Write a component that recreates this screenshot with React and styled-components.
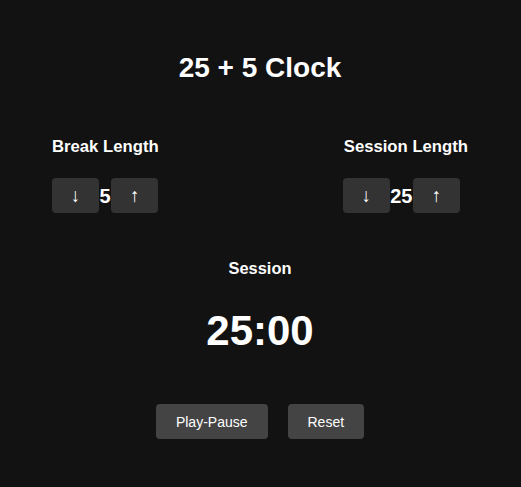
import React from "react";
import styled, { createGlobalStyle } from "styled-components";

const Global = createGlobalStyle`
  html, body { margin: 0; padding: 0; background: #121212; }
  body { font-family: "Liberation Sans", Arial, sans-serif; color: #fff; }
`;

const Page = styled.div`
  min-height: 487px;
  box-sizing: border-box;
  padding: 52px 53px 0 52px;
  display: flex;
  flex-direction: column;
  align-items: stretch;
`;

const Title = styled.h1`
  margin: 0;
  font-size: 28px;
  line-height: 32px;
  font-weight: 700;
  text-align: center;
`;

const LengthsRow = styled.div`
  margin-top: 53px;
  display: flex;
  justify-content: space-between;
  align-items: flex-start;
`;

const Column = styled.div`
  display: flex;
  flex-direction: column;
  align-items: flex-start;
`;

const Label = styled.div`
  font-size: 16.7px;
  line-height: 20px;
  font-weight: 700;
  margin-left: ${(p) => p.$offset || 0}px;
`;

const Controls = styled.div`
  margin-top: 21px;
  display: flex;
  align-items: center;
`;

const ArrowButton = styled.button`
  width: 47px;
  height: 35px;
  border: none;
  border-radius: 4px;
  background: #333;
  color: #fff;
  font-family: "Liberation Sans", Arial, sans-serif;
  font-size: 19px;
  padding: 0;
  display: flex;
  align-items: center;
  justify-content: center;
`;

const Value = styled.span`
  font-size: 20px;
  font-weight: 700;
  line-height: 24px;
  padding: 0 0.5px;
`;

const SessionLabel = styled.div`
  margin-top: 45px;
  text-align: center;
  font-size: 16.4px;
  line-height: 20px;
  font-weight: 700;
`;

const Timer = styled.div`
  margin-top: 29px;
  text-align: center;
  font-size: 42px;
  line-height: 48px;
  font-weight: 700;
`;

const ActionRow = styled.div`
  margin-top: 49px;
  display: flex;
  justify-content: center;
  gap: 20px;
`;

const ActionButton = styled.button`
  height: 35px;
  padding: 0 20px;
  border: none;
  border-radius: 4px;
  background: #444;
  color: #fff;
  font-family: "Liberation Sans", Arial, sans-serif;
  font-size: 14px;
`;

function LengthControl({ title, value, offset }) {
  return (
    <Column>
      <Label $offset={offset}>{title}</Label>
      <Controls>
        <ArrowButton>↓</ArrowButton>
        <Value>{value}</Value>
        <ArrowButton>↑</ArrowButton>
      </Controls>
    </Column>
  );
}

export default function App() {
  return (
    <>
      <Global />
      <Page>
        <Title>25 + 5 Clock</Title>
        <LengthsRow>
          <LengthControl title="Break Length" value={5} />
          <LengthControl title="Session Length" value={25} offset={1} />
        </LengthsRow>
        <SessionLabel>Session</SessionLabel>
        <Timer>25:00</Timer>
        <ActionRow>
          <ActionButton>Play-Pause</ActionButton>
          <ActionButton>Reset</ActionButton>
        </ActionRow>
      </Page>
    </>
  );
}
